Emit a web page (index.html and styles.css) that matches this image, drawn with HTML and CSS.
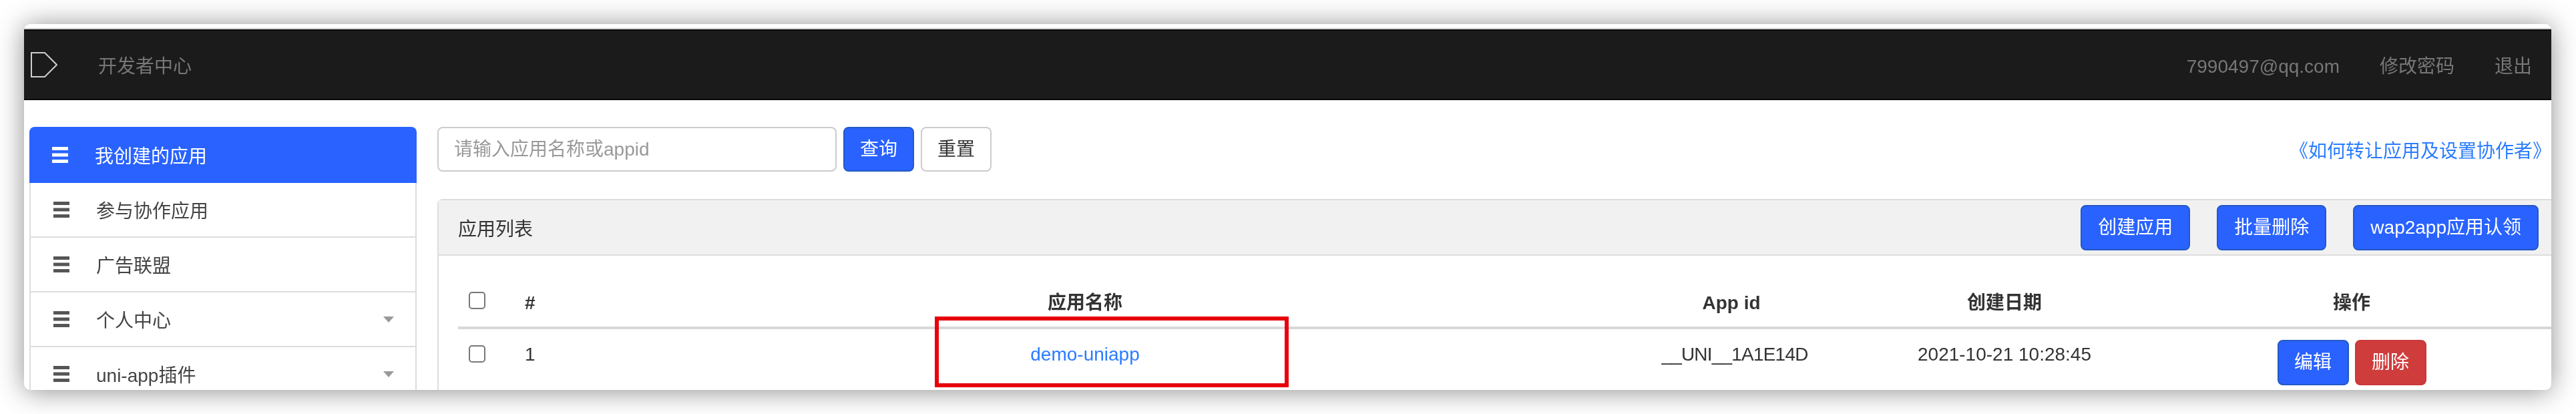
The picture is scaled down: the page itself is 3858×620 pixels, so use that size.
FILE: index.html
```html
<!DOCTYPE html>
<html lang="zh-CN">
<head>
<meta charset="utf-8">
<title>开发者中心</title>
<link rel="stylesheet" href="styles.css">
</head>
<body>
<div class="window">
  <header class="navbar">
    <svg class="logo" width="40" height="38" viewBox="0 0 40 38"><polygon points="1,1 21,1 39,19 21,37 1,37" fill="none" stroke="#cfcfcf" stroke-width="2"/></svg>
    <span class="brand">开发者中心</span>
    <nav class="nav-right">
      <a class="nav-link">7990497@qq.com</a>
      <a class="nav-link">修改密码</a>
      <a class="nav-link">退出</a>
    </nav>
  </header>
  <div class="content">
    <aside class="sidebar">
      <div class="side-item active"><svg class="menu-icon" width="24" height="24" viewBox="0 0 24 24"><path d="M0 0h24v5H0zM0 9.5h24v5H0zM0 19h24v5H0z"/></svg><span>我创建的应用</span></div>
      <div class="side-item"><svg class="menu-icon" width="24" height="24" viewBox="0 0 24 24"><path d="M0 0h24v5H0zM0 9.5h24v5H0zM0 19h24v5H0z"/></svg><span>参与协作应用</span></div>
      <div class="side-item"><svg class="menu-icon" width="24" height="24" viewBox="0 0 24 24"><path d="M0 0h24v5H0zM0 9.5h24v5H0zM0 19h24v5H0z"/></svg><span>广告联盟</span></div>
      <div class="side-item"><svg class="menu-icon" width="24" height="24" viewBox="0 0 24 24"><path d="M0 0h24v5H0zM0 9.5h24v5H0zM0 19h24v5H0z"/></svg><span>个人中心</span><i class="caret"></i></div>
      <div class="side-item"><svg class="menu-icon" width="24" height="24" viewBox="0 0 24 24"><path d="M0 0h24v5H0zM0 9.5h24v5H0zM0 19h24v5H0z"/></svg><span>uni-app插件</span><i class="caret"></i></div>
    </aside>
    <main class="main">
      <div class="toolbar">
        <input class="search" type="text" placeholder="请输入应用名称或appid">
        <button class="btn btn-primary btn-sm">查询</button>
        <button class="btn btn-default btn-sm">重置</button>
        <a class="help-link">《如何转让应用及设置协作者》</a>
      </div>
      <section class="panel">
        <div class="panel-heading">
          <span class="panel-title">应用列表</span>
          <div class="panel-actions">
            <button class="btn btn-primary btn-lg">创建应用</button>
            <button class="btn btn-primary btn-lg">批量删除</button>
            <button class="btn btn-primary btn-lg">wap2app应用认领</button>
          </div>
        </div>
        <div class="panel-body">
          <table class="table">
            <colgroup>
              <col class="col-check"><col class="col-num"><col class="col-name"><col class="col-id"><col class="col-date"><col class="col-op">
            </colgroup>
            <thead>
              <tr>
                <th class="left"><input class="check check-head" type="checkbox"></th>
                <th class="left">#</th>
                <th>应用名称</th>
                <th>App id</th>
                <th>创建日期</th>
                <th class="op">操作</th>
              </tr>
            </thead>
            <tbody>
              <tr>
                <td class="left"><input class="check check-row" type="checkbox"></td>
                <td class="left">1</td>
                <td><a class="app-link">demo-uniapp</a></td>
                <td class="app-id">__UNI__1A1E14D</td>
                <td>2021-10-21 10:28:45</td>
                <td class="op"><button class="btn btn-primary btn-row">编辑</button><button class="btn btn-danger btn-row">删除</button></td>
              </tr>
            </tbody>
          </table>
        </div>
      </section>
    </main>
  </div>
  <div class="highlight"></div>
</div>
</body>
</html>
```

FILE: styles.css
```css
* { box-sizing: border-box; }
html, body { margin: 0; height: 620px; background: #fff; overflow: hidden; }
body {
  padding: 36px 37px 36px 36px;
  font-family: "Liberation Sans", "Noto Sans CJK SC", sans-serif;
  font-size: 28px;
  color: #333;
}
.window {
  position: relative;
  height: 548px;
  background: #fff;
  border-radius: 9px;
  overflow: hidden;
  padding-top: 8px;
  box-shadow: 0 2px 40px rgba(0, 0, 0, 0.45);
  filter: blur(0.6px);
}
.navbar {
  display: flex;
  align-items: center;
  height: 106px;
  background: #1b1b1b;
  border-top: 2px solid #0a0a0a;
  border-bottom: 2px solid #0a0a0a;
  box-shadow: 0 -2px 0 #cfcfcf;
  padding: 0 29px 0 10px;
}
.logo { flex: none; }
.brand { margin-left: 61px; color: #777; }
.nav-right { margin-left: auto; display: flex; align-items: baseline; gap: 60px; }
.nav-link { color: #777; }
.content { display: flex; padding: 40px 0 0 8px; }
.sidebar { flex: none; width: 580px; }
.side-item {
  display: flex;
  align-items: center;
  height: 82px;
  padding: 0 32px 0 34px;
  border: solid #ddd;
  border-width: 0 2px 2px 2px;
  color: #444;
}
.side-item.active {
  height: 84px;
  background: #2962ff;
  border: 0;
  border-radius: 8px 8px 0 0;
  color: #fff;
}
.menu-icon { flex: none; margin-right: 40px; fill: #555; }
.active .menu-icon { fill: #fff; }
.caret {
  margin-left: auto;
  width: 0; height: 0;
  border-left: 8px solid transparent;
  border-right: 8px solid transparent;
  border-top: 9px solid #999;
}
.main { flex: 1; min-width: 0; margin-left: 31px; }
.toolbar { display: flex; align-items: center; height: 67px; }
.search {
  width: 598px;
  height: 67px;
  margin-right: 10px;
  padding: 0 23px;
  border: 2px solid #ccc;
  border-radius: 8px;
  font: inherit;
  color: #333;
  background: #fff;
}
.search::placeholder { color: #999; opacity: 1; }
.help-link { margin-left: auto; color: #2a7cff; }
.btn {
  border: 2px solid transparent;
  border-radius: 8px;
  font: inherit;
  line-height: 1;
  padding: 0;
}
.btn-primary { background: #2962ff; border-color: #2459c4; color: #fff; }
.btn-default { background: #fff; border-color: #ccc; color: #333; }
.btn-danger { background: #cf3c3c; border-color: #c9383a; color: #fff; }
.btn-sm { width: 106px; height: 67px; margin-right: 10px; }
.btn-lg { height: 68px; padding: 0 24px; }
.btn-row { width: 107px; height: 68px; }
.btn-row + .btn-row { margin-left: 9px; }
.panel {
  margin-top: 41px;
  border: solid #ddd;
  border-width: 2px 0 0 2px;
  border-top-left-radius: 8px;
}
.panel-heading {
  display: flex;
  align-items: center;
  height: 83px;
  padding: 0 19px 0 29px;
  background: #f1f1f1;
  border-bottom: 2px solid #ddd;
}
.panel-actions { margin-left: auto; display: flex; gap: 40px; }
.panel-body { padding: 34px 0 0 29px; }
.table { width: 100%; table-layout: fixed; border-collapse: collapse; }
.col-check { width: 100px; }
.col-num { width: 114px; }
.col-name { width: 1450px; }
.col-id { width: 486px; }
.col-date { width: 332px; }
.table th, .table td { text-align: center; vertical-align: top; line-height: 44px; white-space: nowrap; }
.table th {
  padding: 15px 0 13px;
  border-bottom: 4px solid #d8d8d8;
  font-weight: 700;
  color: #333;
}
.table td { padding: 16px 0; }
.table .left { text-align: left; }
.table .op { padding-left: 55px; }
.table .app-id { padding-left: 10px; letter-spacing: -0.8px; }
.check {
  appearance: none;
  display: block;
  width: 25px;
  height: 26px;
  margin: 0 0 0 16px;
  border: 2px solid #777;
  border-radius: 5px;
  background: #fff;
}
.check-head { margin-top: 5px; }
.check-row { margin-top: 8px; }
.app-link { color: #2a7cff; }
.highlight {
  position: absolute;
  left: 1364px; top: 438px;
  width: 530px; height: 106px;
  border: 6px solid #e8000b;
}
```
